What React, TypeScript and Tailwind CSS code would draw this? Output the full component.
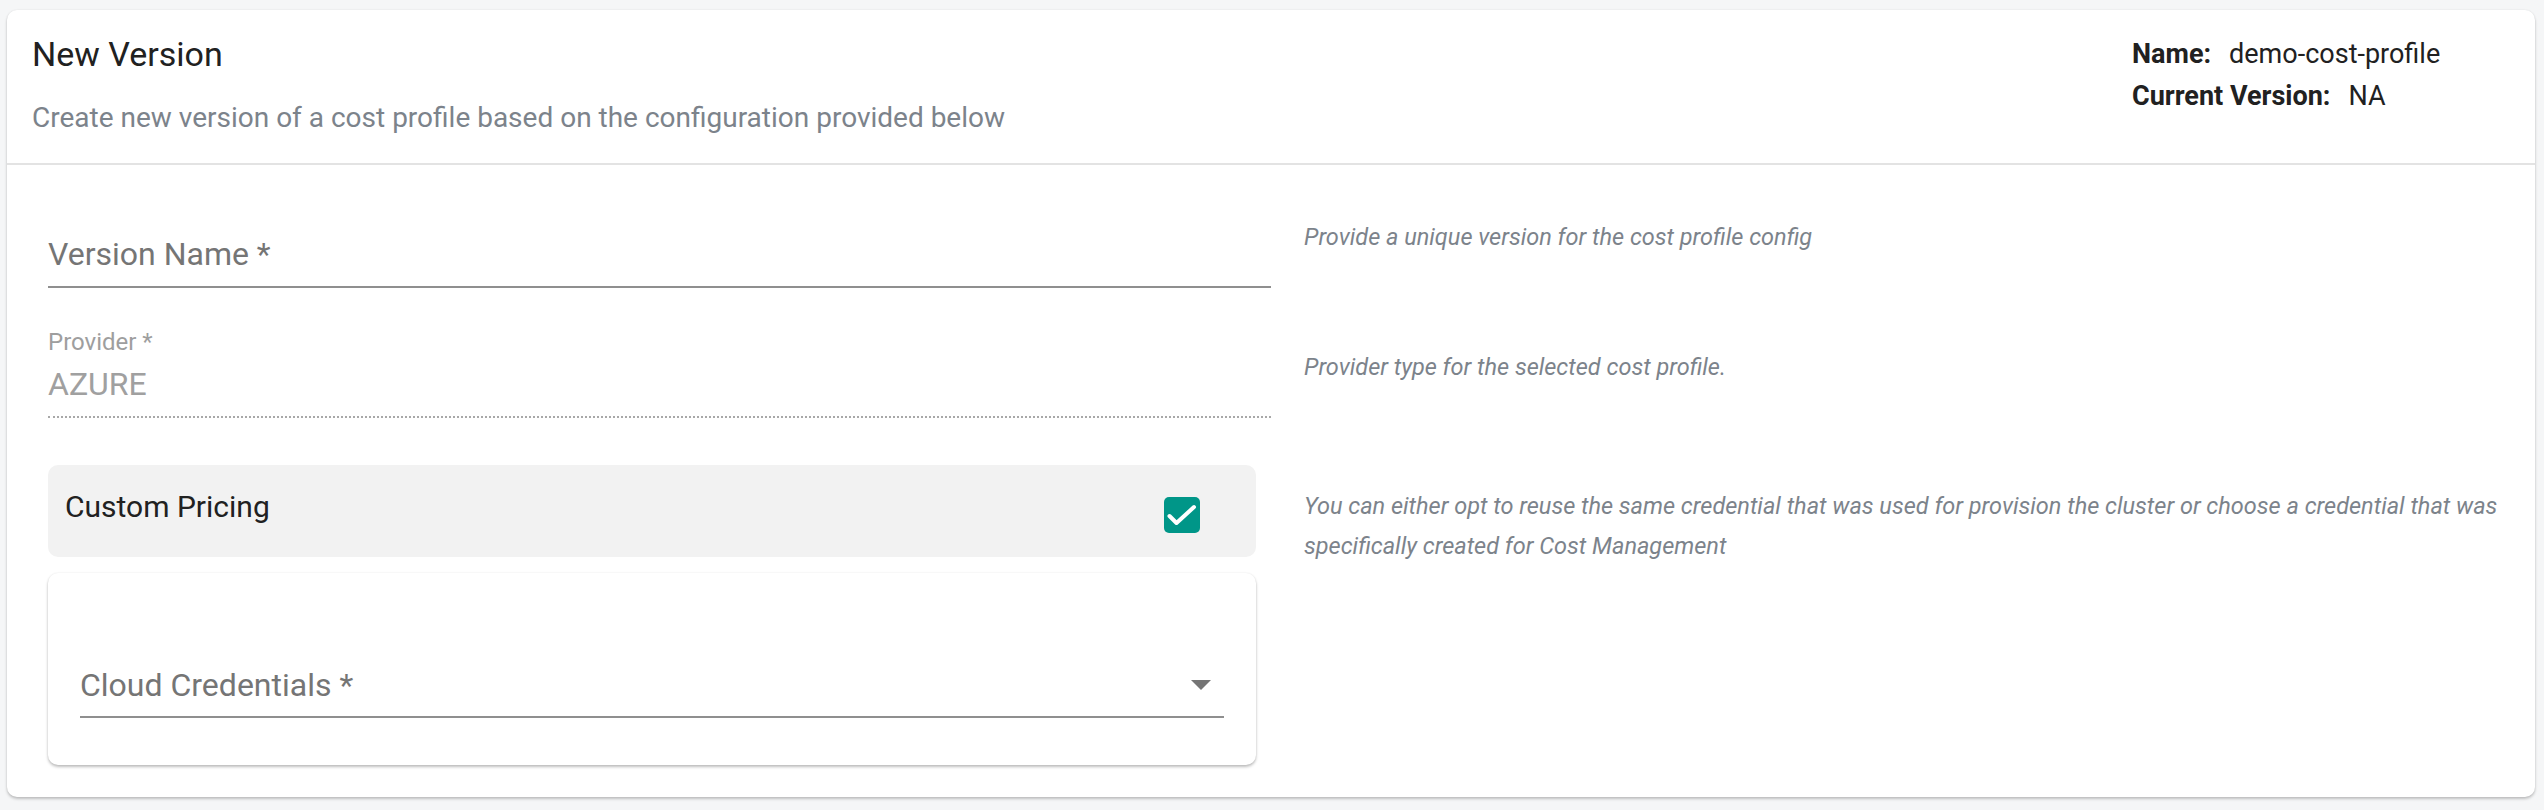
import React from 'react'

const font = { fontFamily: 'Roboto, "Noto Sans", Arial, sans-serif' }

function HelperText({ children, className = '' }: { children: React.ReactNode; className?: string }) {
  return (
    <p className={`text-[23.5px] italic leading-[40px] text-[#7c838b] ${className}`}>{children}</p>
  )
}

function CheckedBox() {
  return (
    <span className="mt-[8px] mr-[56px] flex h-[36px] w-[36px] items-center justify-center rounded-[5px] bg-[#009688]">
      <svg viewBox="0 0 36 36" className="h-[36px] w-[36px]" fill="none">
        <path d="M5.5 19l7 7L30 10" stroke="#fff" strokeWidth="4" strokeLinecap="round" strokeLinejoin="round" />
      </svg>
    </span>
  )
}

export default function App() {
  return (
    <div className="min-h-[810px] bg-[#f5f6f7] pt-[10px] pr-[9px] pb-[11px] pl-[7px]" style={font}>
      <section className="rounded-[10px] bg-white shadow-[0_2px_3px_rgba(0,0,0,0.22),0_0_2px_rgba(0,0,0,0.08)]">
        {/* header */}
        <header className="flex h-[155px] border-b-2 border-[#e3e3e3]">
          <div className="flex-1 pl-[25px] pt-[24px]">
            <h1 className="text-[34px] leading-[40px] text-[#212121]">New Version</h1>
            <p className="mt-[28px] text-[28px] leading-[32px] text-[#7c838b]">
              Create new version of a cost profile based on the configuration provided below
            </p>
          </div>
          <div className="w-[403px] shrink-0 pt-[23px] text-[27px] leading-[42px] text-[#212121]">
            <div>
              <span className="font-bold">Name:</span>
              <span className="ml-[18px]">demo-cost-profile</span>
            </div>
            <div>
              <span className="font-bold">Current Version:</span>
              <span className="ml-[18px]">NA</span>
            </div>
          </div>
        </header>

        {/* body */}
        <div className="pl-[41px] pr-[25px] pb-[32px]">
          {/* version name */}
          <div className="flex items-start">
            <div className="w-[1223px] shrink-0 pt-[69px]">
              <div className="border-b-2 border-[#8f8f8f] pb-[12px] text-[32px] leading-[40px] text-[#757575]">
                Version Name *
              </div>
            </div>
            <HelperText className="ml-[33px] pt-[52px]">Provide a unique version for the cost profile config</HelperText>
          </div>

          {/* provider */}
          <div className="flex items-start">
            <div className="w-[1223px] shrink-0 pt-[40px]">
              <div className="border-b-2 border-dotted border-[#a8a8a8] pb-[12px]">
                <div className="text-[24px] leading-[28px] text-[#9e9e9e]">Provider *</div>
                <div className="mt-[8px] text-[32px] leading-[40px] text-[#a0a0a0]">AZURE</div>
              </div>
            </div>
            <HelperText className="ml-[33px] pt-[59px]">Provider type for the selected cost profile.</HelperText>
          </div>

          {/* custom pricing */}
          <div className="flex items-start">
            <div className="w-[1208px] shrink-0 pt-[47px]">
              <div className="flex h-[92px] items-start justify-between rounded-[10px] bg-[#f2f2f2] pl-[17px] pt-[24px]">
                <span className="text-[30px] leading-[36px] text-[#212121]">Custom Pricing</span>
                <CheckedBox />
              </div>
              <div className="mt-[16px] rounded-[10px] bg-white px-[32px] pt-[92px] pb-[47px] shadow-[0_2px_3px_rgba(0,0,0,0.25),0_0_2px_rgba(0,0,0,0.08)]">
                <div className="flex items-center justify-between border-b-2 border-[#8f8f8f] pb-[11px]">
                  <span className="text-[32px] leading-[40px] text-[#757575]">Cloud Credentials *</span>
                  <svg viewBox="0 0 20 10" className="mr-[13px] h-[10px] w-[20px]">
                    <path d="M0 0h20L10 10z" fill="#757575" />
                  </svg>
                </div>
              </div>
            </div>
            <HelperText className="ml-[48px] pt-[68px]">
              You can either opt to reuse the same credential that was used for provision the cluster or choose a credential that was specifically created for Cost Management
            </HelperText>
          </div>
        </div>
      </section>
    </div>
  )
}
